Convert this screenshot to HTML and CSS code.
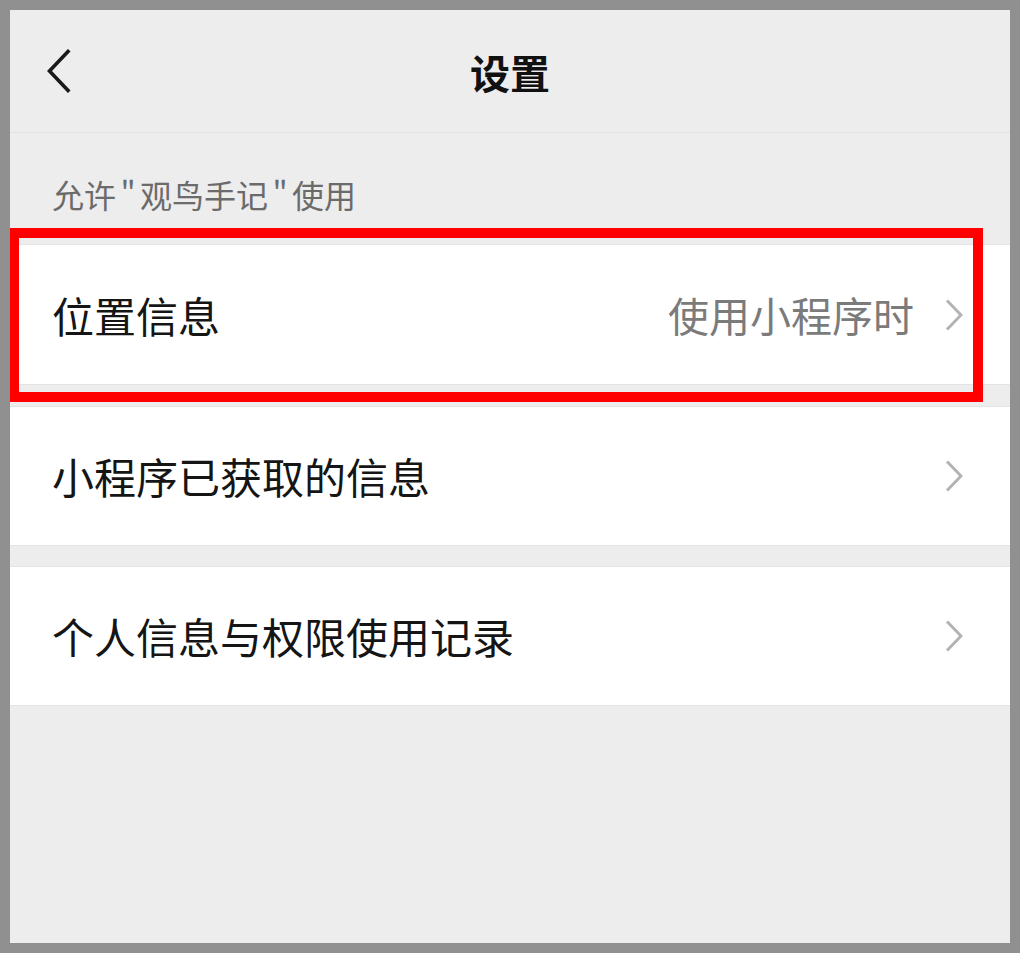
FILE: index.html
```html
<!DOCTYPE html>
<html lang="zh-CN">
<head>
    <meta charset="UTF-8">
    <meta name="viewport" content="width=device-width, initial-scale=1.0">
    <title>设置</title>
    <link rel="stylesheet" href="styles.css">
</head>
<body>
    <div class="screen">

        <!-- Header -->
        <header class="topbar">
            <a class="back" href="#">
                <svg width="26" height="44" viewBox="0 0 26 44">
                    <polyline points="22,2.5 3.5,22 22,41.5" fill="none" stroke="#1a1a1a" stroke-width="3.6" stroke-linecap="square" stroke-linejoin="miter"/>
                </svg>
            </a>
            <h1 class="title">设置</h1>
        </header>

        <!-- Izin -->
        <p class="section-label">允许<span class="q">"</span>观鸟手记<span class="q">"</span>使用</p>

        <div class="cell highlighted">
            <span class="cell-name">位置信息</span>
            <span class="cell-value">使用小程序时</span>
            <svg class="arrow" width="18" height="32" viewBox="0 0 18 32">
                <polyline points="2,1.5 16,16 2,30.5" fill="none" stroke="#b3b3b3" stroke-width="3"/>
            </svg>
            <div class="mark"></div>
        </div>

        <div class="cell">
            <span class="cell-name">小程序已获取的信息</span>
            <svg class="arrow" width="18" height="32" viewBox="0 0 18 32">
                <polyline points="2,1.5 16,16 2,30.5" fill="none" stroke="#b3b3b3" stroke-width="3"/>
            </svg>
        </div>

        <div class="cell">
            <span class="cell-name">个人信息与权限使用记录</span>
            <svg class="arrow" width="18" height="32" viewBox="0 0 18 32">
                <polyline points="2,1.5 16,16 2,30.5" fill="none" stroke="#b3b3b3" stroke-width="3"/>
            </svg>
        </div>

    </div>
</body>
</html>
```

FILE: styles.css
```css
body {
    font-family: "Noto Sans CJK SC", "Noto Sans", sans-serif;
    background: #909090;
    margin: 0;
    padding: 10px;
}

.screen {
    background: #ededed;
    height: 933px;
    overflow: hidden;
}

/* Header */
.topbar {
    position: relative;
    height: 122px;
    border-bottom: 1px solid #e2e2e2;
    display: flex;
    align-items: center;
    justify-content: center;
}
.back {
    position: absolute;
    left: 36px;
    top: 39px;
    display: block;
    line-height: 0;
}
.title {
    margin: 0;
    font-size: 40px;
    font-weight: bold;
    color: #111;
    line-height: 1;
    padding-top: 2px;
}

/* Label */
.section-label {
    margin: 0;
    padding: 41px 0 29px 42px;
    font-size: 32px;
    line-height: 41px;
    color: #6b6b6b;
}
.section-label .q {
    display: inline-block;
    width: 24px;
    text-align: center;
}

/* Baris */
.cell {
    position: relative;
    display: flex;
    align-items: center;
    height: 138px;
    padding: 0 47px 0 42px;
    background: #fff;
    border-top: 1px solid #e4e4e4;
    border-bottom: 1px solid #e4e4e4;
    margin-bottom: 20px;
}
.cell.highlighted {
    height: 139px;
    margin-bottom: 21px;
}
.cell-name {
    flex: 1;
    font-size: 42px;
    color: #151515;
    line-height: 1;
}
.cell-value {
    font-size: 41px;
    color: #7b7b7b;
    line-height: 1;
    margin-right: 31px;
}
.arrow {
    display: block;
    flex-shrink: 0;
}

/* Kotak merah */
.mark {
    position: absolute;
    top: -17px;
    left: -1px;
    width: 974px;
    height: 174px;
    box-sizing: border-box;
    border: 10px solid #ff0000;
}
```
